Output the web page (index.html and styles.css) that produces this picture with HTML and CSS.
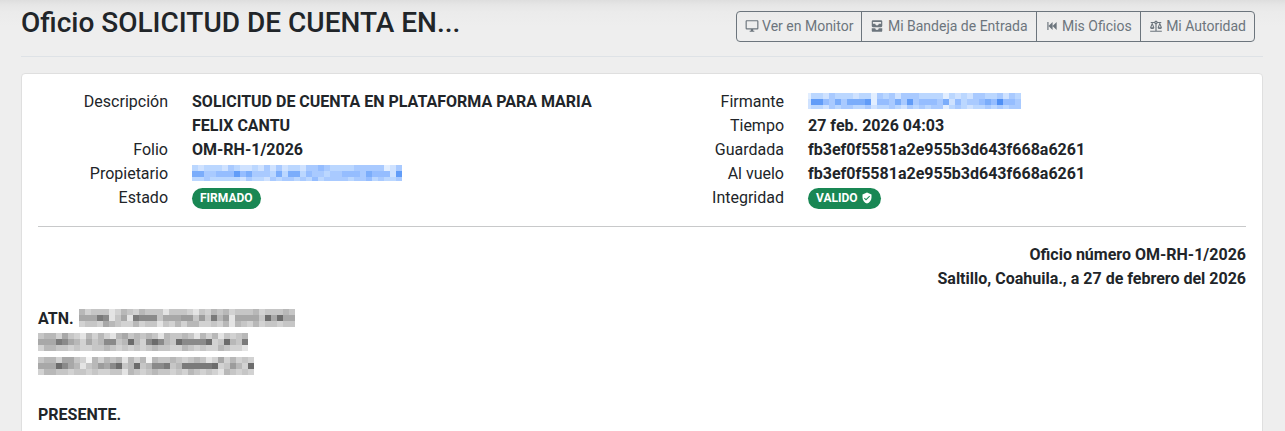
FILE: index.html
```
<!DOCTYPE html>
<html lang="es">
<head>
  <meta charset="UTF-8">
  <meta name="viewport" content="width=device-width, initial-scale=1.0">
  <title>Oficio</title>
  <link rel="stylesheet" href="styles.css">
</head>
<body>
  <main class="page">
    <header class="page-header">
      <h1>Oficio SOLICITUD DE CUENTA EN...</h1>
      <nav class="btn-group">
        <a class="btn" href="#">
          <svg class="icon" viewBox="0 0 24 24"><path d="M21,16H3V4H21M21,2H3C1.89,2 1,2.89 1,4V16A2,2 0 0,0 3,18H10V20H8V22H16V20H14V18H21A2,2 0 0,0 23,16V4C23,2.89 22.1,2 21,2Z"/></svg>
          Ver en Monitor
        </a>
        <a class="btn" href="#">
          <svg class="icon" viewBox="0 0 24 24"><path fill-rule="evenodd" d="M5 2h14a2 2 0 0 1 2 2v8a2 2 0 0 1-2 2H5a2 2 0 0 1-2-2V4a2 2 0 0 1 2-2zM5 5v3h4a3 3 0 0 0 6 0h4V5zM3 16h6a3 3 0 0 0 6 0h6v4a2 2 0 0 1-2 2H5a2 2 0 0 1-2-2z"/></svg>
          Mi Bandeja de Entrada
        </a>
        <a class="btn" href="#">
          <svg class="icon" viewBox="0 0 24 24"><path d="M20,5V19L13,12M6,5V19H4V5M13,5V19L6,12"/></svg>
          Mis Oficios
        </a>
        <a class="btn" href="#">
          <svg class="icon" viewBox="0 0 24 24"><path d="M12,3C10.73,3 9.6,3.8 9.18,5H3V7H4.95L2,14C1.53,16 3,17 5.5,17C8,17 9.56,16 9,14L6.05,7H9.17C9.5,7.85 10.15,8.5 11,8.83V20H2V22H22V20H13V8.82C13.85,8.5 14.5,7.85 14.82,7H17.95L15,14C14.53,16 16,17 18.5,17C21,17 22.56,16 22,14L19.05,7H21V5H14.83C14.4,3.8 13.27,3 12,3M12,5A1,1 0 0,1 13,6A1,1 0 0,1 12,7A1,1 0 0,1 11,6A1,1 0 0,1 12,5M5.5,10.25L7,14H4L5.5,10.25M18.5,10.25L20,14H17L18.5,10.25Z"/></svg>
          Mi Autoridad
        </a>
      </nav>
    </header>

    <section class="card">
      <div class="details">
        <dl>
          <dt>Descripción</dt>
          <dd>SOLICITUD DE CUENTA EN PLATAFORMA PARA MARIA FELIX CANTU</dd>
          <dt>Folio</dt>
          <dd>OM-RH-1/2026</dd>
          <dt>Propietario</dt>
          <dd><a class="redacted" href="#"><svg class="mosaic" data-tone="blue" data-rows="21222132112131312213343222233333013 55334446453332525524332334443544416 22322222132213233232423333233423223"></svg></a></dd>
          <dt>Estado</dt>
          <dd><span class="badge">FIRMADO</span></dd>
        </dl>
        <dl>
          <dt>Firmante</dt>
          <dd><a class="redacted" href="#"><svg class="mosaic" data-tone="blue" data-crop="3" data-rows="022132221220323133322220212133223132 166435355560443536344435142334547443 122132332231223213232330232122323233"></svg></a></dd>
          <dt>Tiempo</dt>
          <dd>27 feb. 2026 04:03</dd>
          <dt>Guardada</dt>
          <dd>fb3ef0f5581a2e955b3d643f668a6261</dd>
          <dt>Al vuelo</dt>
          <dd>fb3ef0f5581a2e955b3d643f668a6261</dd>
          <dt>Integridad</dt>
          <dd>
            <span class="badge">VALIDO
              <svg class="icon" viewBox="0 0 24 24"><path d="M12 1L3 5v6c0 5.55 3.84 10.74 9 12 5.16-1.26 9-6.45 9-12V5l-9-4zm-2 16l-4-4 1.41-1.41L10 14.17l6.59-6.59L18 9l-8 8z"/></svg>
            </span>
          </dd>
        </dl>
      </div>

      <hr>

      <div class="letter">
        <p class="right">Oficio número OM-RH-1/2026<br>Saltillo, Coahuila., a 27 de febrero del 2026</p>
        <div class="recipient">
          <div class="line">ATN. <svg class="mosaic" data-tone="gray" data-rows="423331243243331333213243423334233343 555871351877735556636384615555395955 233254322423313242442232414324233233"></svg></div>
          <div class="line"><svg class="mosaic" data-tone="gray" data-rows="34425321424214534343143343142413234 55587542534773494279743977779239438 24433232233432323234332243232243221"></svg></div>
          <div class="line"><svg class="mosaic" data-tone="gray" data-rows="344255320424341424043343234312524232 555975413465793493477834888889236429 244332332322331432343323243232143232"></svg></div>
        </div>
        <p>PRESENTE.</p>
      </div>
    </section>
  </main>

  <script src="script.js"></script>
</body>
</html>
```

FILE: styles.css
```
* {
  box-sizing: border-box;
}

body {
  margin: 0;
  height: 100vh;
  overflow: hidden;
  font-family: Roboto, "Liberation Sans", sans-serif;
  font-size: 16px;
  line-height: 24px;
  color: #212529;
  background: #eee linear-gradient(#dedede, #e6e6e6 5px, #ebebeb 12px, #eee 26px) no-repeat;
}

.page {
  padding: 0 22px 0 21px;
}

/* Title and actions */
.page-header {
  display: flex;
  justify-content: space-between;
  align-items: flex-end;
  padding: 5px 8px 14px 0;
  margin-bottom: 16px;
  border-bottom: 1px solid #dee2e6;
}

h1 {
  margin: 0;
  align-self: flex-start;
  font-size: 28px;
  font-weight: 500;
  line-height: 36px;
}

.btn-group {
  display: flex;
  padding-top: 6px;
}

.btn {
  padding: 4px 8px;
  border: 1px solid #6c757d;
  font-size: 14px;
  line-height: 21px;
  color: #6c757d;
  text-decoration: none;
  white-space: nowrap;
}

.btn + .btn {
  margin-left: -1px;
}

.btn:first-child {
  border-radius: 4px 0 0 4px;
}

.btn:last-child {
  border-radius: 0 4px 4px 0;
}

.btn:hover {
  color: #fff;
  background: #6c757d;
}

.icon {
  width: 1em;
  height: 1em;
  fill: currentColor;
  vertical-align: -2px;
}

/* Document */
.card {
  padding: 16px;
  background: #fff;
  border: 1px solid #dfdfdf;
  border-radius: 4px;
}

.details {
  display: grid;
  grid-template-columns: 1fr 1fr;
  margin: 0 -12px;
}

dl {
  display: grid;
  grid-template-columns: 1fr 3fr;
  align-content: start;
  margin: 0;
}

dt,
dd {
  margin: 0;
  padding: 0 12px;
}

dt {
  text-align: right;
}

dd {
  font-weight: 700;
}

.redacted {
  display: flex;
  align-items: center;
  height: 24px;
}

.badge {
  display: inline-block;
  padding: 4px 8px;
  border-radius: 11px;
  font-size: 12px;
  line-height: 13px;
  vertical-align: 1px;
  color: #fff;
  background: #198754;
}

hr {
  margin: 16px 0;
  border: 0;
  border-top: 1px solid #c8c9ca;
}

.letter {
  font-weight: 700;
}

.letter p {
  margin: 0;
}

.right {
  text-align: right;
}

.recipient {
  margin: 16px 0 24px;
}

.line {
  display: flex;
  align-items: center;
  gap: 5px;
  height: 24px;
}

.mosaic {
  display: block;
  margin-bottom: 2px;
}
```

FILE: script.js
```
const CELL = 6;

const tones = {
  blue: ['#e2eeff', '#cfe2ff', '#bbd7ff', '#a9caff', '#95bdff', '#7badfb', '#619cf8', '#4f90f5'],
  gray: ['#f6f6f6', '#e4e4e4', '#d2d2d2', '#c6c6c6', '#b8b8b8', '#a8a8a8', '#9c9c9c', '#8a8a8a', '#7a7a7a', '#6c6c6c']
};

// each digit is one cell, the higher the darker
document.querySelectorAll('.mosaic').forEach(svg => {
  const rows = svg.dataset.rows.split(' ');
  const colors = tones[svg.dataset.tone];
  const crop = Number(svg.dataset.crop || 0);
  const width = rows[0].length * CELL - crop;
  const height = svg.dataset.tone === 'blue' ? 16 : 18;

  svg.setAttribute('width', width);
  svg.setAttribute('height', height);
  svg.setAttribute('viewBox', `${crop} 0 ${width} ${height}`);
  svg.setAttribute('shape-rendering', 'crispEdges');

  rows.forEach((row, y) => {
    [...row].forEach((level, x) => {
      const rect = document.createElementNS('http://www.w3.org/2000/svg', 'rect');
      rect.setAttribute('x', x * CELL);
      rect.setAttribute('y', y * CELL);
      rect.setAttribute('width', CELL);
      rect.setAttribute('height', CELL);
      rect.setAttribute('fill', colors[level]);
      svg.appendChild(rect);
    });
  });
});
```
